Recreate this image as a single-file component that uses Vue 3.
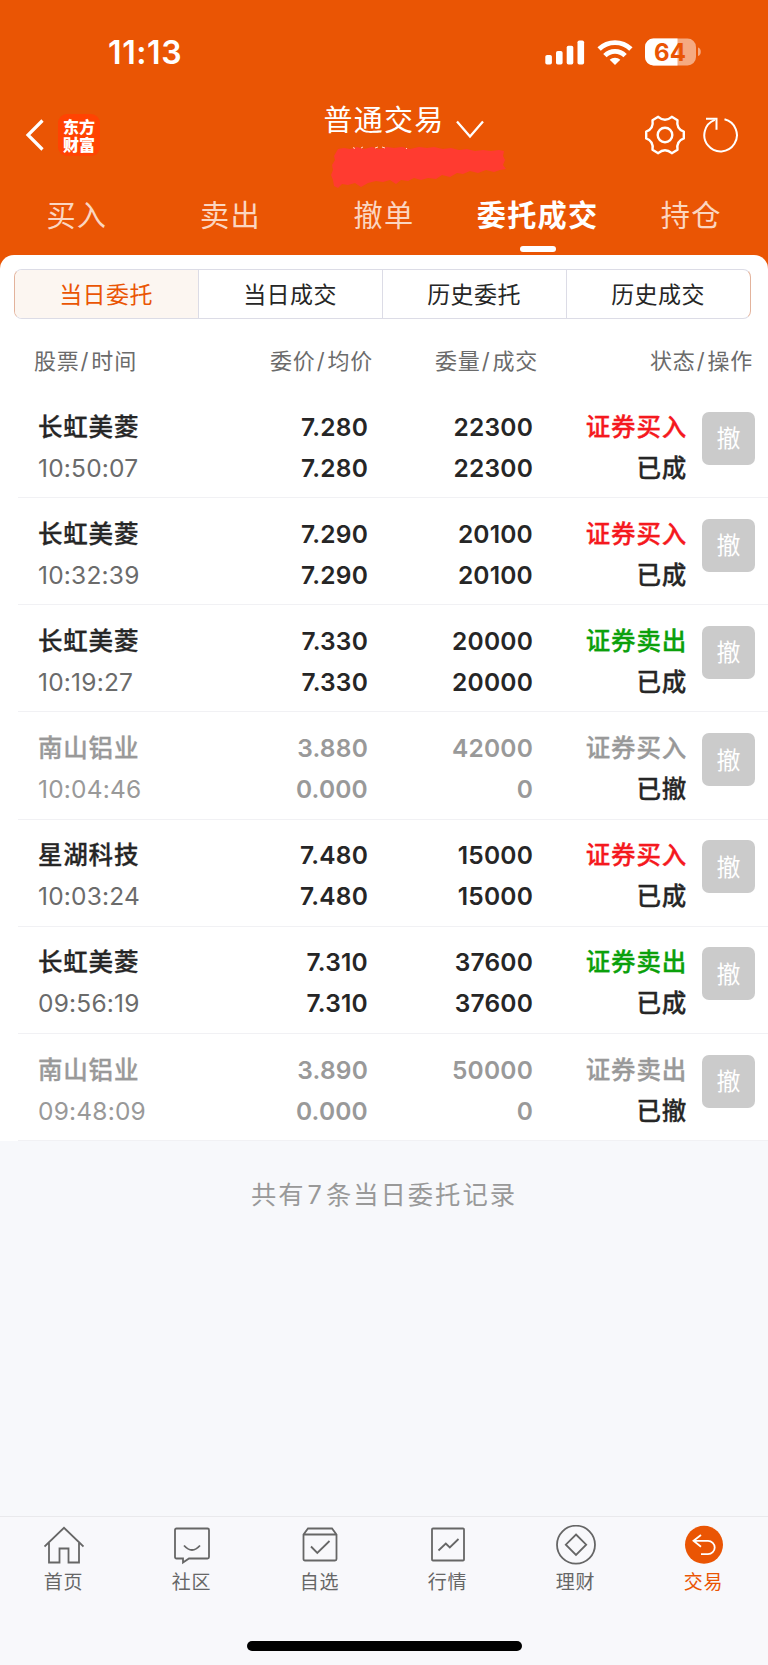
<template>
  <div class="page">
    <header class="header">
      <div class="status-bar">
        <span class="clock">11:13</span>
        <div class="status-icons">
          <svg class="signal" width="40" height="25" viewBox="0 0 40 25" fill="#fff">
            <rect x="0.3" y="15" width="6.6" height="9.6" rx="1.8" />
            <rect x="11" y="11" width="6.6" height="13.6" rx="1.8" />
            <rect x="21.7" y="5.8" width="6.6" height="18.8" rx="1.8" />
            <rect x="32.5" y="0.4" width="6.6" height="24.2" rx="1.8" />
          </svg>
          <svg class="wifi" width="36" height="25" viewBox="0 0 36 25" fill="none" stroke="#fff" stroke-width="4.8">
            <path d="M2.1 9C11 0.4 25 0.4 33.9 9" />
            <path d="M7.9 15.6C13.6 10 22.4 10 28.1 15.6" />
            <path d="M12.7 19.8C15.5 17 20.5 17 23.3 19.8L18 25Z" fill="#fff" stroke="none" />
          </svg>
          <svg class="battery" width="57" height="28" viewBox="0 0 57 28">
            <defs>
              <clipPath id="shell"><rect x="0" y="0.5" width="51" height="27" rx="8.5" /></clipPath>
            </defs>
            <g clip-path="url(#shell)">
              <rect width="51" height="28" fill="#f5aa81" />
              <rect width="32.5" height="28" fill="#fff" />
            </g>
            <path d="M53 9.5C56.7 10.5 56.7 17 53 18Z" fill="#f5aa81" />
            <text x="25" y="22.5" text-anchor="middle" class="battery-text">64</text>
          </svg>
        </div>
      </div>

      <div class="nav-bar">
        <div class="nav-left">
          <svg width="20" height="32" viewBox="0 0 20 32" fill="none" stroke="#fff" stroke-width="3.2">
            <path d="M18.5 1.5L4 16L18.5 30.5" />
          </svg>
          <div class="logo">东方财富</div>
        </div>
        <div class="nav-title">
          <span>普通交易</span>
          <svg width="28" height="20" viewBox="0 0 28 20" fill="none" stroke="#fff" stroke-width="2.3">
            <path d="M1 1.5L14 16.5L27 1.5" />
          </svg>
          <!-- 账号涂抹 -->
          <svg class="scribble" width="178" height="44" viewBox="0 0 178 44">
            <path
              d="M8 3L14 2L20 3L27 1L34 3L42 1L49 3L57 1L64 2L72 1L80 3L89 1L97 2L104 1L113 3L121 2L129 4L137 3L145 5L153 4L161 5L169 4L174 5L173 10L175 14L173 19L176 23L170 24L164 26L156 24L148 27L140 25L133 28L127 27L120 31L112 29L106 33L98 32L91 34L84 32L78 35L71 34L66 38L60 34L53 36L46 35L38 37L31 41L25 37L18 39L12 38L8 42L4 40L3 34L1 29L3 24L2 19L5 14L4 10Z"
              fill="#ff3b30"
            />
            <path d="M23 1.5l2 1M31 2l2-1M45 2l3-1M52 1l3 1M76 2.5h1" stroke="#ffd8c5" stroke-width="1" />
          </svg>
        </div>
        <div class="nav-right">
          <svg width="40" height="40" viewBox="0 0 40 40" fill="none" stroke="#fff" stroke-width="2.4" stroke-linejoin="round">
            <path
              d="M13.2 1.8C17.5 5.4 22.5 5.4 26.8 1.8L32.5 5.2C31.5 11 33.3 14.5 38.8 16.6V23.4C33.3 25.5 31.5 29 32.5 34.8L26.8 38.2C22.5 34.6 17.5 34.6 13.2 38.2L7.5 34.8C8.5 29 6.7 25.5 1.2 23.4V16.6C6.7 14.5 8.5 11 7.5 5.2Z"
            />
            <circle cx="20" cy="20" r="7.3" />
          </svg>
          <svg width="36" height="36" viewBox="0 0 36 36" fill="none" stroke="#fff" stroke-width="2">
            <path d="M21.5 2.3A16.3 16.3 0 1 1 11.8 2.9" />
            <path d="M3 1.8H13.5V12.8" />
          </svg>
        </div>
      </div>

      <nav class="tabs">
        <div v-for="tab in tabs" :key="tab" class="tab" :class="{ active: tab === activeTab }">{{ tab }}</div>
      </nav>
    </header>

    <main class="sheet">
      <div class="segments">
        <div v-for="item in segments" :key="item" class="segment" :class="{ active: item === activeSegment }">
          {{ item }}
        </div>
      </div>

      <div class="table-head">
        <span>股票<i>/</i>时间</span>
        <span class="num">委价<i>/</i>均价</span>
        <span class="num">委量<i>/</i>成交</span>
        <span class="num">状态<i>/</i>操作</span>
      </div>

      <div v-for="order in orders" :key="order.time" class="row" :class="{ cancelled: order.state === '已撤' }">
        <div class="cell">
          <span class="name">{{ order.name }}</span>
          <span class="time">{{ order.time }}</span>
        </div>
        <div class="cell num">
          <span>{{ order.price }}</span>
          <span>{{ order.avg }}</span>
        </div>
        <div class="cell num">
          <span>{{ order.amount }}</span>
          <span>{{ order.filled }}</span>
        </div>
        <div class="cell num cn">
          <span :class="order.side">{{ order.side === 'buy' ? '证券买入' : '证券卖出' }}</span>
          <span class="state">{{ order.state }}</span>
        </div>
        <button class="revoke">撤</button>
      </div>
    </main>

    <p class="summary">共有<i>7</i>条当日委托记录</p>

    <footer class="footer">
      <div class="menu">
        <div class="menu-item">
          <svg width="40" height="40" viewBox="0 0 40 40">
            <path d="M0.5 21.5L20 2.8L39.5 21.5M5 18V37.5H15.5V23.5H24.5V37.5H35V18" />
          </svg>
          <span>首页</span>
        </div>
        <div class="menu-item">
          <svg width="40" height="40" viewBox="0 0 40 40">
            <path d="M4.5 3.5H35.5Q37 3.5 37 5V32Q37 33.5 35.5 33.5H17L11 37.5V33.5H4.5Q3 33.5 3 32V5Q3 3.5 4.5 3.5Z" />
            <path d="M12 20.5Q20 29.5 28 20.5" />
          </svg>
          <span>社区</span>
        </div>
        <div class="menu-item">
          <svg width="40" height="40" viewBox="0 0 40 40">
            <path d="M3.5 9.5L8 3.5H32L36.5 9.5V34Q36.5 35.5 35 35.5H5Q3.5 35.5 3.5 34ZM3.5 9.5H36.5" />
            <path d="M11 21.5L17.3 28L29.5 16" />
          </svg>
          <span>自选</span>
        </div>
        <div class="menu-item">
          <svg width="40" height="40" viewBox="0 0 40 40">
            <rect x="4" y="3.5" width="32" height="32" rx="1" />
            <path d="M10.5 25.5L17.8 18.5L21.8 22.5L30.5 14" />
          </svg>
          <span>行情</span>
        </div>
        <div class="menu-item">
          <svg width="40" height="40" viewBox="0 0 40 40">
            <circle cx="20" cy="19.7" r="19" />
            <path d="M20 9.5L30.2 19.7L20 29.9L9.8 19.7Z" />
          </svg>
          <span>理财</span>
        </div>
        <div class="menu-item current">
          <svg width="40" height="40" viewBox="0 0 40 40">
            <circle cx="20" cy="19.7" r="19" fill="#ea5504" stroke="none" />
            <path d="M17 10L9.5 15.8L17 21.8M10 15.8H24A6.6 6.6 0 0 1 24 29.2H17" stroke="#fff" />
          </svg>
          <span>交易</span>
        </div>
      </div>
      <div class="home-indicator"></div>
    </footer>
  </div>
</template>

<script setup>
import { ref } from 'vue';

const tabs = ['买入', '卖出', '撤单', '委托成交', '持仓'];
const activeTab = ref('委托成交');

const segments = ['当日委托', '当日成交', '历史委托', '历史成交'];
const activeSegment = ref('当日委托');

const orders = ref([
  { name: '长虹美菱', time: '10:50:07', price: '7.280', avg: '7.280', amount: 22300, filled: 22300, side: 'buy', state: '已成' },
  { name: '长虹美菱', time: '10:32:39', price: '7.290', avg: '7.290', amount: 20100, filled: 20100, side: 'buy', state: '已成' },
  { name: '长虹美菱', time: '10:19:27', price: '7.330', avg: '7.330', amount: 20000, filled: 20000, side: 'sell', state: '已成' },
  { name: '南山铝业', time: '10:04:46', price: '3.880', avg: '0.000', amount: 42000, filled: 0, side: 'buy', state: '已撤' },
  { name: '星湖科技', time: '10:03:24', price: '7.480', avg: '7.480', amount: 15000, filled: 15000, side: 'buy', state: '已成' },
  { name: '长虹美菱', time: '09:56:19', price: '7.310', avg: '7.310', amount: 37600, filled: 37600, side: 'sell', state: '已成' },
  { name: '南山铝业', time: '09:48:09', price: '3.890', avg: '0.000', amount: 50000, filled: 0, side: 'sell', state: '已撤' },
]);
</script>

<style>
body {
  margin: 0;
}
</style>

<style scoped>
.page {
  display: flex;
  flex-direction: column;
  width: 768px;
  height: 1665px;
  overflow: hidden;
  background: #f7f8fb;
  color: #262626;
  font-family: Inter, 'Noto Sans CJK SC', sans-serif;
}
.page * {
  box-sizing: border-box;
}
svg {
  display: block;
  flex: none;
}

/* 顶部 */
.header {
  height: 271px;
  flex: none;
  background: #ea5504;
  color: #fff;
}
.status-bar {
  display: flex;
  justify-content: space-between;
  align-items: center;
  height: 104px;
  padding: 0 66px 0 108px;
}
.clock {
  font-size: 32px;
  font-weight: 600;
  letter-spacing: 0.6px;
}
.status-icons {
  display: flex;
  align-items: center;
}
.wifi {
  margin: 0 12px;
}
.battery-text {
  font-size: 24px;
  font-weight: 700;
  fill: #ea5504;
}
.nav-bar {
  display: grid;
  grid-template-columns: 1fr auto 1fr;
  grid-template-rows: 62px;
  align-items: center;
  height: 62px;
  padding: 0 29px 0 24px;
}
.nav-left {
  display: flex;
  align-items: center;
  gap: 14px;
}
.logo {
  width: 42px;
  height: 42px;
  padding: 3px 5px;
  border-radius: 9px;
  background: #ff4302;
  font-family: 'Noto Sans CJK SC', sans-serif;
  font-size: 16px;
  font-weight: 900;
  line-height: 18px;
}
.nav-title {
  position: relative;
  display: flex;
  align-self: start;
  align-items: center;
  gap: 11px;
  height: 42px;
  margin: -4px -22px 0 22px;
  font-size: 29px;
  line-height: 32px;
  letter-spacing: 1.3px;
}
.nav-title > svg:not(.scribble) {
  margin-top: 18px;
}
.scribble {
  position: absolute;
  left: 7px;
  top: 46px;
}
.nav-right {
  display: flex;
  justify-content: flex-end;
  align-items: center;
  gap: 18px;
}
.tabs {
  display: grid;
  grid-template-columns: repeat(5, 153.6px);
  height: 89px;
}
.tab {
  display: flex;
  flex-direction: column;
  align-items: center;
  padding-top: 29px;
  font-size: 29.2px;
  line-height: 42px;
  letter-spacing: 1.2px;
  color: #fbd6c1;
}
.tab.active {
  color: #fff;
  font-weight: 700;
}
.tab.active::after {
  content: '';
  width: 36px;
  height: 6px;
  margin-top: 9px;
  border-radius: 3px;
  background: #fff;
}

/* 委托列表 */
.sheet {
  flex: none;
  margin-top: -16px;
  padding-top: 14px;
  border-radius: 14px 14px 0 0;
  background: #fff;
}
.segments {
  display: flex;
  height: 50px;
  margin: 0 17px 0 14px;
  border: 1px solid #dcdce6;
  border-left-color: #e3b39c;
  border-right-color: #e3b39c;
  border-radius: 8px;
  overflow: hidden;
}
.segment {
  display: flex;
  flex: 1;
  align-items: center;
  justify-content: center;
  padding: 0 1px 2px 0;
  font-size: 23px;
  letter-spacing: 0.4px;
}
.segment + .segment {
  border-left: 1px solid #dcdce6;
}
.segment.active {
  background: #fcf6f1;
  color: #ea5504;
}
.table-head {
  display: grid;
  grid-template-columns: 190px 149px 165px 215px;
  align-items: center;
  height: 72px;
  padding: 8px 0 0 34px;
  font-size: 22px;
  letter-spacing: 0.8px;
  color: #6b6b6b;
}
.table-head i {
  margin: 0 2px 0 1px;
  font-style: normal;
}
.num {
  text-align: right;
}
.row {
  display: grid;
  grid-template-columns: 190px 140px 165px 154px 53px;
  height: 107.15px;
  margin-left: 18px;
  padding: 15.7px 0 0 20px;
  border-bottom: 1px solid #f1f1f4;
  font-size: 24.5px;
  font-weight: 600;
}
.cell {
  display: flex;
  flex-direction: column;
}
.cell span {
  height: 41px;
  line-height: 41px;
  white-space: nowrap;
}
.cell.num {
  letter-spacing: 0.2px;
}
.name,
.cell.cn {
  letter-spacing: 0.8px;
  font-weight: 500;
  -webkit-text-stroke: 0.3px;
}
.time {
  font-weight: 400;
  letter-spacing: 0.2px;
  color: #6b6b6b;
}
.buy {
  color: #f5191e;
}
.sell {
  color: #0ba00b;
}
.cancelled {
  color: #999;
}
.cancelled .time,
.cancelled .buy,
.cancelled .sell {
  color: #999;
}
.cancelled .state {
  color: #262626;
}
.revoke {
  width: 53px;
  height: 53px;
  margin: 5px 0 0 15px;
  padding: 0 0 3px;
  border: none;
  border-radius: 7px;
  background: #cbcbcb;
  color: #fff;
  font: 400 24px 'Noto Sans CJK SC', sans-serif;
}
.summary {
  margin: 33px 0 0;
  text-align: center;
  font-size: 25.3px;
  line-height: 42px;
  letter-spacing: 2px;
  color: #999;
}
.summary i {
  margin: 0 2px;
  font-style: normal;
}

/* 底部导航 */
.footer {
  height: 149px;
  flex: none;
  margin-top: auto;
  border-top: 1px solid #e9e9ec;
  background: #f8f8fb;
}
.menu {
  display: grid;
  grid-template-columns: repeat(6, 1fr);
  height: 124px;
}
.menu-item {
  display: flex;
  flex-direction: column;
  align-items: center;
  padding-top: 8px;
  font-size: 19px;
  line-height: 28px;
  letter-spacing: 0.7px;
  color: #666;
}
.menu-item svg {
  fill: none;
  stroke: #666;
  stroke-width: 1.8;
}
.menu-item span {
  margin: 4px 1px 0 0;
}
.menu-item.current {
  color: #ea5504;
}
.home-indicator {
  width: 275px;
  height: 10px;
  margin: 0 auto;
  border-radius: 5px;
  background: #000;
}
</style>
